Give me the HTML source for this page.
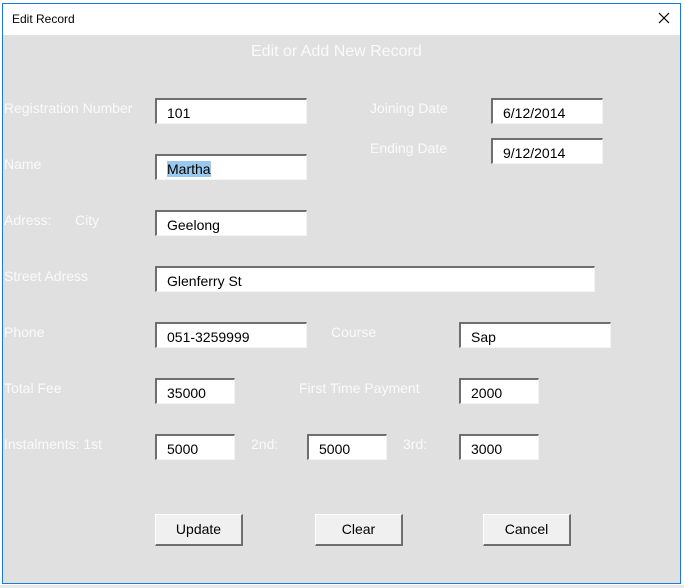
<!DOCTYPE html>
<html><head><style>
body{margin:0;width:684px;height:588px;background:#fff;position:relative;overflow:hidden;font-family:"Liberation Sans",sans-serif}
#shadow{position:absolute;left:0;top:585px;width:684px;height:3px;background:#e8e8e8}
#win{position:absolute;left:2px;top:3px;width:677px;height:579px;border:1px solid #1a7ad8;background:#e0e0e0}
#tb{position:absolute;left:0;top:0;width:677px;height:31px;background:#fff}
#tb span{position:absolute;left:9px;top:8px;font-size:12px;color:#000}
.l{position:absolute;color:#fafafa;font-size:14px}
.t{position:absolute;height:26px;background:#fff;border-top:2px solid #6e6e6e;border-left:2px solid #6e6e6e;border-right:1px solid #f4f4f4;border-bottom:1px solid #f4f4f4;box-sizing:border-box;font-size:14px;color:#000;padding:5px 0 0 10px}
.b{position:absolute;width:88px;height:32px;background:#f0f0f0;border:1px solid #fff;border-right:2px solid #6e6e6e;border-bottom:2px solid #6e6e6e;box-sizing:border-box;font-size:14px;text-align:center;line-height:29px;color:#000}
</style></head><body>
<div id="shadow"></div>
<div id="win">
<div id="tb"><span>Edit Record</span>
<svg style="position:absolute;left:655px;top:8px" width="12" height="12"><path d="M1 1L11 11M11 1L1 11" stroke="#000" stroke-width="1.2"/></svg></div>
</div>
<div class="l" style="left:251px;top:43px;font-size:16px">Edit or Add New Record</div>
<div class="l" style="left:4px;top:100px">Registration Number</div>
<div class="l" style="left:4px;top:156px">Name</div>
<div class="l" style="left:4px;top:212px">Adress:</div>
<div class="l" style="left:75px;top:212px">City</div>
<div class="l" style="left:4px;top:268px">Street Adress</div>
<div class="l" style="left:4px;top:324px">Phone</div>
<div class="l" style="left:4px;top:380px">Total Fee</div>
<div class="l" style="left:4px;top:436px">Instalments: 1st</div>
<div class="l" style="left:370px;top:100px">Joining Date</div>
<div class="l" style="left:370px;top:140px">Ending Date</div>
<div class="l" style="left:331px;top:324px">Course</div>
<div class="l" style="left:299px;top:380px">First Time Payment</div>
<div class="l" style="left:251px;top:436px">2nd:</div>
<div class="l" style="left:403px;top:436px">3rd:</div>
<div class="t" style="left:155px;top:98px;width:152px">101</div>
<div class="t" style="left:155px;top:154px;width:152px"><span style="background:#99c9ef">Martha</span></div>
<div class="t" style="left:155px;top:210px;width:152px">Geelong</div>
<div class="t" style="left:155px;top:266px;width:440px">Glenferry St</div>
<div class="t" style="left:155px;top:322px;width:152px">051-3259999</div>
<div class="t" style="left:459px;top:322px;width:152px">Sap</div>
<div class="t" style="left:155px;top:378px;width:80px">35000</div>
<div class="t" style="left:459px;top:378px;width:80px">2000</div>
<div class="t" style="left:155px;top:434px;width:80px">5000</div>
<div class="t" style="left:307px;top:434px;width:80px">5000</div>
<div class="t" style="left:459px;top:434px;width:80px">3000</div>
<div class="t" style="left:491px;top:98px;width:112px">6/12/2014</div>
<div class="t" style="left:491px;top:138px;width:112px">9/12/2014</div>
<div class="b" style="left:155px;top:514px">Update</div>
<div class="b" style="left:315px;top:514px">Clear</div>
<div class="b" style="left:483px;top:514px">Cancel</div>
</body></html>
